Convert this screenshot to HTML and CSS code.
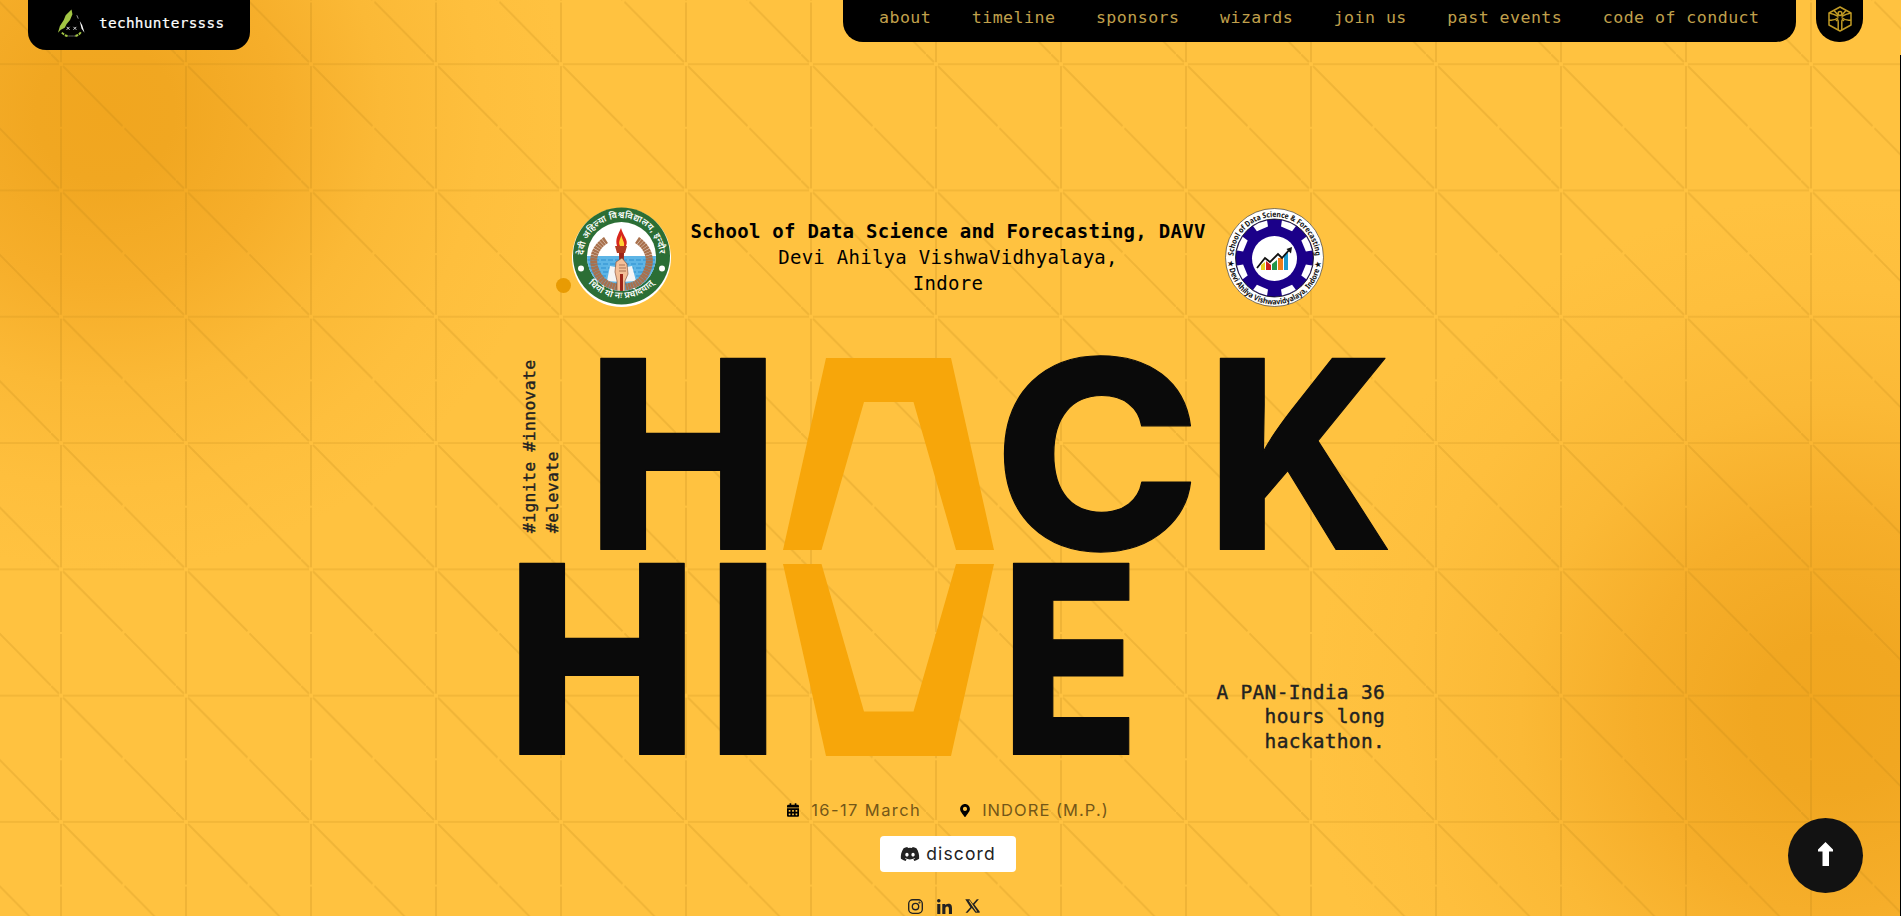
FILE: index.html
```html
<!DOCTYPE html>
<html lang="en">
<head>
<meta charset="utf-8">
<title>HackHive</title>
<link rel="stylesheet" href="styles.css">
</head>
<body>
<svg class="backdrop" aria-hidden="true">
  <defs>
    <pattern id="grid" x="51" y="54.200" width="125" height="126.300" patternUnits="userSpaceOnUse">
      <g transform="translate(10 10)">
        <path class="grid-line" d="M0 2V62.500M0 64.500V124.300M0 -10V-2"/>
        <path class="grid-line thin" d="M2 0H123M-10 0H-2"/>
        <path class="grid-line" d="M2 2L61.500 61.800M63.500 64L123 124.300M-10 -10L-2 -2"/>
      </g>
    </pattern>
  </defs>
  <rect width="100%" height="100%" fill="url(#grid)"/>
</svg>

<header class="topbar">
  <a class="brand">
    <svg class="brand-mark" viewBox="0 0 30 30">
      <path d="M15 1L16 6L13.500 12L10 16L8 20L4 22L1 25L3 18L7 12L9 7Z" fill="#a3c644"/>
      <path d="M20.500 7L22 10.500" stroke="#999" stroke-width="1" fill="none"/>
      <path d="M23.500 13L26 17L28.500 25L25.500 21Z" fill="#fff"/>
      <path d="M10 19l3 3m0-3l-3 3M17 19l3 3m0-3l-3 3" stroke="#ddd" stroke-width="1"/>
      <path d="M5 25Q8 28 11 28.500M19 28.500Q23 27.500 25 24" stroke="#a3c644" stroke-width="2" stroke-dasharray="3 1" fill="none"/>
      <path d="M12 28.500h7" stroke="#777" stroke-width="1.600" stroke-dasharray="1 1"/>
    </svg>
    <span class="brand-name">techhunterssss</span>
  </a>
  <nav class="nav">
    <a>about</a><a>timeline</a><a>sponsors</a><a>wizards</a><a>join us</a><a>past events</a><a>code of conduct</a>
  </nav>
  <a class="cube">
    <svg viewBox="0 0 24 26" width="24" height="26" fill="none" stroke="#c09a25" stroke-width="1.500" stroke-linejoin="round">
      <path d="M12 1L23 7V19L12 25L1 19V7Z"/>
      <path d="M1 7Q6 8 10.500 10.500M23 7Q18 8 13.500 10.500M1 14Q6 15 10.500 11.500M23 14Q18 15 13.500 11.500M6 4.500L10.500 9.500M18 4.500L13.500 9.500"/>
      <path d="M10.200 24V16Q10.200 12 8 15M13.800 24V16Q13.800 12 16 15"/>
      <circle cx="12" cy="7.500" r="1.900"/>
    </svg>
  </a>
</header>

<main class="hero">
  <section class="affiliation">
    <svg class="seal" viewBox="0 0 99 99">
      <defs>
        <path id="arcTop" d="M11.500 48A38 38 0 0 1 87.500 48"/>
        <path id="arcBottom" d="M14 72A43.500 43.500 0 0 0 85 72"/>
        <clipPath id="disc"><circle cx="49.500" cy="48.500" r="34.500"/></clipPath>
      </defs>
      <circle cx="49.500" cy="49.500" r="49.500" fill="#fff"/>
      <circle cx="49.500" cy="48" r="48.500" fill="#2b6e35"/>
      <circle cx="49.500" cy="48.500" r="34.500" fill="#fff"/>
      <g clip-path="url(#disc)">
        <path d="M10 48H90V84H10Z" fill="#5db5e6"/>
        <path class="waves" d="M15 52h70M17 56h68M15 60h70M17 64h68M15 68h70M20 72h60M22 76h55"/>
        <path d="M38 58L49 60L60 58L64 73L49 74L35 73Z" fill="#f5f5f5"/>
        <path class="wreath" d="M34 32C22 40 19 52 24 63C28 73 36 78 45 79"/>
        <path class="wreath" d="M65 32C77 40 80 52 75 63C71 73 63 78 54 79"/>
        <path d="M47 45h5l-1 38h-3Z" fill="#9c2418"/>
        <path d="M43 38h12l-2 7h-8Z" fill="#b13a20"/>
        <path d="M49 20C46 27 43 31 45 38H54C57 32 51 28 49 20Z" fill="#d8261c"/>
        <path d="M49.500 27C48 32 46 34 48 38H52C53 34 50 32 49.500 27Z" fill="#ffcf33"/>
        <path d="M44 54L50 50L55 56L56 66L53 73V84H45V73L43 64Z" fill="#f3bf98" stroke="#7a4128" stroke-width=".6"/>
        <path d="M47 57h6M47 60h7M47 63h7" stroke="#7a4128" stroke-width=".6"/>
        <path d="M48 66h3v17h-3Z" fill="#9c2418"/>
      </g>
      <circle cx="9" cy="60.500" r="3" fill="#fff"/><circle cx="90" cy="60.500" r="3" fill="#fff"/>
      <text class="seal-hindi"><textPath href="#arcTop" startOffset="1" textLength="116">देवी अहिल्या विश्वविद्यालय, इन्दौर</textPath></text>
      <text class="seal-hindi"><textPath href="#arcBottom" startOffset="4" textLength="74">धियो यो नः प्रचोदयात्</textPath></text>
    </svg>
    <div class="school">
      <strong>School of Data Science and Forecasting, DAVV</strong>
      <span>Devi Ahilya VishwaVidhyalaya,</span>
      <span>Indore</span>
    </div>
    <svg class="seal" viewBox="0 0 99 99">
      <defs>
        <path id="ringTop" d="M8.500 50A41 41 0 0 1 90.500 50"/>
        <path id="ringBottom" d="M3 50A46.500 46.500 0 0 0 96 50"/>
      </defs>
      <circle cx="49.500" cy="49.500" r="49" fill="#fff" stroke="#222" stroke-width=".6"/>
      <circle cx="49.500" cy="50" r="39" fill="#1b0089" stroke="#111" stroke-width=".8"/>
      <g fill="#fff" transform="translate(49.500 50)">
        <g id="notch"><path d="M-7.500 -37.500Q0 -39 7.500 -37.500L6 -31.500L-6 -31.500Z" transform="rotate(22.500)"/><path d="M-7.500 -37.500Q0 -39 7.500 -37.500L6 -31.500L-6 -31.500Z" transform="rotate(67.500)"/></g>
        <use href="#notch" transform="rotate(90)"/><use href="#notch" transform="rotate(180)"/><use href="#notch" transform="rotate(270)"/>
      </g>
      <circle cx="49.500" cy="50.500" r="22.500" fill="#fff"/>
      <path d="M36 62V57L40 54V62Z" fill="#e9d321"/><path d="M41 62V53L46 57V62Z" fill="#cf1f1f"/><path d="M47 62V56L52 52V62Z" fill="#23964b"/><path d="M53 62V50H58V62Z" fill="#ee7d1a"/><path d="M59 62V48L63 44V62Z" fill="#1b9ad0"/>
      <path d="M32 60L40 50L45 54L53 46L57 50L65 41" stroke="#111" stroke-width="1.800" fill="none"/><path d="M67 39L61.500 41L66 45.500Z" fill="#111"/>
      <text class="seal-latin"><textPath href="#ringTop" startOffset="2" textLength="124.500" lengthAdjust="spacingAndGlyphs">School of Data Science &amp; Forecasting</textPath></text>
      <text class="seal-latin"><textPath href="#ringBottom" startOffset="3" textLength="139" lengthAdjust="spacingAndGlyphs">★ Devi Ahilya Vishwavidyalaya, Indore ★</textPath></text>
    </svg>
  </section>

  <section class="wordmark">
    <p class="motto">#ignite #innovate<br>#elevate</p>
    <svg class="title" viewBox="519 350 871 412" role="img" aria-label="Hack Hive">
      <g class="title-type">
        <text transform="translate(586.200 549.500) scale(.985 1)">H</text>
        <text transform="translate(993.300 549.500) scale(1.063 1)">C</text>
        <text transform="translate(1206 549.500) scale(.967 1)">K</text>
        <text transform="translate(505.200 754.500) scale(.985 1)">H</text>
        <text transform="translate(705.500 754.500)">I</text>
        <text class="narrow" transform="translate(1000.500 754.500) scale(.87 1)">E</text>
      </g>
      <path class="hex" d="M826 358H951L994 550H956L913.500 402H864L821.500 550H783Z"/>
      <path class="hex" d="M826 756H951L994 564H956L913.500 711.500H864L821.500 564H783Z"/>
    </svg>
    <p class="pitch">A PAN-India 36<br>hours long<br>hackathon.</p>
  </section>

  <section class="meta">
    <span class="meta-item">
      <svg width="12" height="14" viewBox="0 0 448 512"><path d="M0 464c0 26 22 48 48 48h352c26 0 48-22 48-48V192H0v272zm320-196c0-7 5-12 12-12h40c7 0 12 5 12 12v40c0 7-5 12-12 12h-40c-7 0-12-5-12-12v-40zm0 128c0-7 5-12 12-12h40c7 0 12 5 12 12v40c0 7-5 12-12 12h-40c-7 0-12-5-12-12v-40zM192 268c0-7 5-12 12-12h40c7 0 12 5 12 12v40c0 7-5 12-12 12h-40c-7 0-12-5-12-12v-40zm0 128c0-7 5-12 12-12h40c7 0 12 5 12 12v40c0 7-5 12-12 12h-40c-7 0-12-5-12-12v-40zM64 268c0-7 5-12 12-12h40c7 0 12 5 12 12v40c0 7-5 12-12 12H76c-7 0-12-5-12-12v-40zm0 128c0-7 5-12 12-12h40c7 0 12 5 12 12v40c0 7-5 12-12 12H76c-7 0-12-5-12-12v-40zM400 64h-48V16c0-9-7-16-16-16h-32c-9 0-16 7-16 16v48H160V16c0-9-7-16-16-16h-32c-9 0-16 7-16 16v48H48C22 64 0 86 0 112v48h448v-48c0-26-22-48-48-48z"/></svg>
      <span class="date">16-17 March</span>
    </span>
    <span class="meta-item">
      <svg width="10" height="13" viewBox="0 0 384 512"><path d="M172 502C27 291 0 270 0 192 0 86 86 0 192 0s192 86 192 192c0 78-27 99-172 310-9 13-30 13-40 0zM192 272c44 0 80-36 80-80s-36-80-80-80-80 36-80 80 36 80 80 80z"/></svg>
      <span class="place">INDORE (M.P.)</span>
    </span>
  </section>

  <a class="discord">
    <svg width="20" height="16" viewBox="0 0 640 512"><path d="M524.500 69.800a1.500 1.500 0 0 0-.8-.7A485 485 0 0 0 404 32a1.800 1.800 0 0 0-1.900.9 337 337 0 0 0-14.900 30.600 448 448 0 0 0-134.400 0 310 310 0 0 0-15.100-30.600 1.900 1.900 0 0 0-1.900-.9A484 484 0 0 0 116 69.100a1.700 1.700 0 0 0-.8.700C39 183.700 18.200 294.700 28.400 404.400a2 2 0 0 0 .8 1.400A488 488 0 0 0 176 479.900a1.900 1.900 0 0 0 2.100-.7 348 348 0 0 0 30-48.800 1.900 1.900 0 0 0-1-2.600 321 321 0 0 1-45.900-21.900 1.900 1.900 0 0 1-.2-3.100c3.100-2.300 6.200-4.700 9.100-7.100a1.800 1.800 0 0 1 1.900-.3c96.200 43.900 200.400 43.900 295.500 0a1.800 1.800 0 0 1 1.900.2c2.900 2.400 6 4.900 9.100 7.200a1.900 1.900 0 0 1-.2 3.100 301 301 0 0 1-45.900 21.800 1.900 1.900 0 0 0-1 2.600 391 391 0 0 0 30 48.800 1.900 1.900 0 0 0 2.100.7A486 486 0 0 0 610.700 405.700a1.900 1.900 0 0 0 .8-1.400C623.700 277.600 590.900 167.500 524.500 69.800ZM222.500 337.600c-29 0-52.800-26.600-52.800-59.200s23.400-59.300 52.800-59.300c29.700 0 53.300 26.800 52.800 59.200 0 32.700-23.400 59.300-52.800 59.300Zm195.400 0c-29 0-52.800-26.600-52.800-59.200s23.400-59.300 52.800-59.300c29.700 0 53.300 26.800 52.800 59.200 0 32.700-23.200 59.300-52.800 59.300Z"/></svg>
    <span>discord</span>
  </a>

  <div class="socials">
    <svg width="15" height="15" viewBox="0 0 15 15" fill="none" stroke="#222" stroke-width="1.350"><rect x=".7" y=".7" width="13.600" height="13.600" rx="4"/><circle cx="7.500" cy="7.500" r="3.200"/><circle cx="11.500" cy="3.500" r=".4"/></svg>
    <svg width="15" height="15" viewBox="0 0 448 448"><path d="M100 448H7V149h93zM54 108a54 54 0 1 1 0-108 54 54 0 0 1 0 108zM448 448h-93V302c0-35-1-79-48-79-49 0-56 38-56 76v149h-93V149h89v41h1c13-24 43-48 88-48 94 0 112 62 112 142z"/></svg>
    <svg width="15" height="14" viewBox="0 0 512 462"><path d="M403 0h71L319 177l182 241v44H358L232 297 89 462H18l166-190L9 0h146l114 151zM378 420h39L163 40h-42z"/></svg>
  </div>
</main>

<i class="cursor-dot"></i>
<i class="edge"></i>
<a class="to-top"><svg width="15" height="24" viewBox="0 0 15 24"><path d="M7.500 0L15 7.500V9.500H11V24H4.500V9.500H0V7.500Z" fill="#fff"/></svg></a>
</body>
</html>
```

FILE: styles.css
```css
* { box-sizing: border-box; }
html, body { height: 100%; }
body {
  margin: 0;
  overflow: hidden;
  position: relative;
  background:
    radial-gradient(circle 460px at 105px 112px, #f1a61f 0%, #f1a721 15%, #f6ae2a 38%, #fbb936 60%, #febf3d 82%, rgba(255,194,64,0) 100%),
    radial-gradient(circle 520px at 1832px 715px, #f1a61f 0%, #f1a721 15%, #f6ae2a 38%, #fbb936 60%, #febf3d 82%, rgba(255,194,64,0) 100%),
    #ffc240;
  font-family: "DejaVu Sans Mono", monospace;
  color: #222;
}
p { margin: 0; }
svg { overflow: visible; }
.backdrop { position: absolute; inset: 0; width: 100%; height: 100%; z-index: -1; overflow: hidden; }
.grid-line { fill: none; stroke: #b07a10; stroke-opacity: .19; stroke-width: 2; }
.grid-line.thin { stroke-width: 1.500; stroke-opacity: .22; }

.topbar { display: flex; align-items: flex-start; height: 50px; padding: 0 38px 0 28px; }
.brand { display: flex; align-items: center; gap: 13px; width: 222px; height: 50px; padding: 0 0 5px 29px; background: #000; border-radius: 0 0 18px 18px; color: #fff; }
.brand-mark { width: 29px; height: 30px; flex: none; }
.brand-name { font-size: 14.400px; letter-spacing: .3px; -webkit-text-stroke: .2px #fff; }
.nav { display: flex; gap: 40.500px; width: 953px; height: 42px; margin-left: auto; padding: 8px 0 0 36px; background: #000; border-radius: 0 0 20px 20px; color: #c0a04c; font-size: 16.600px; line-height: 20px; letter-spacing: .46px; white-space: nowrap; }
.cube { display: flex; justify-content: center; width: 47px; height: 42px; margin-left: 20px; padding-top: 6px; background: #000; border-radius: 0 0 23px 23px; }

.hero { display: flex; flex-direction: column; align-items: center; padding-right: 5px; }
.affiliation { display: flex; justify-content: center; gap: 19px; margin-top: 158px; height: 99px; }
.seal { width: 99px; height: 99px; flex: none; }
.seal-hindi { font: 600 9px "Noto Sans Devanagari", "Noto Sans", sans-serif; fill: #fff; }
.seal-latin { font: 700 7.800px "Noto Sans", sans-serif; fill: #111; }
.waves { stroke: #2c8fd0; stroke-width: 1; stroke-dasharray: 5 2; }
.wreath { fill: none; stroke: #a9714d; stroke-width: 7; stroke-dasharray: 2.500 .3; }
.school { display: flex; flex-direction: column; align-items: center; width: 516px; padding-top: 10px; color: #000; font-size: 19px; line-height: 26px; letter-spacing: .27px; white-space: nowrap; }

.wordmark { position: relative; width: 871px; height: 412px; margin-top: 43px; margin-left: 13px; }
.title { display: block; width: 871px; height: 412px; }
.title-type { font: 800 262.800px Inter, sans-serif; fill: #0a0a0a; stroke: #0a0a0a; stroke-width: 1.200px; stroke-linejoin: round; }
.narrow { font-weight: 830; }
.hex { fill: #f7a60a; }
.motto { position: absolute; left: -1px; top: 8px; height: 175px; writing-mode: vertical-rl; transform: rotate(180deg); font-size: 16.400px; line-height: 23.300px; letter-spacing: .33px; white-space: nowrap; -webkit-text-stroke: .4px #222; }
.pitch { position: absolute; right: 5px; bottom: 8px; text-align: right; font-size: 19.500px; line-height: 24.400px; letter-spacing: .3px; -webkit-text-stroke: .4px #222; }

.meta { display: flex; gap: 39px; height: 22px; margin-top: 37px; font-family: Inter, sans-serif; font-size: 16.500px; line-height: 22px; color: #745718; }
.meta-item { display: flex; align-items: center; gap: 12px; }
.meta svg { fill: #000; }
.date { letter-spacing: 1.400px; }
.place { letter-spacing: 1.050px; }
.discord { display: flex; align-items: center; justify-content: center; gap: 6px; width: 136px; height: 36px; margin-top: 15px; background: #fff; border-radius: 4px; font: 400 17.500px Inter, sans-serif; letter-spacing: 1.150px; }
.discord span { position: relative; top: -1px; }
.discord svg, .socials svg { fill: #222; }
.socials { display: flex; gap: 13.500px; margin-top: 27px; margin-right: 8px; }
.socials svg:first-child { fill: none; }

.cursor-dot { position: absolute; left: 556px; top: 278px; width: 15px; height: 15px; border-radius: 50%; background: #e89b03; }
.edge { position: absolute; right: 0; top: 55px; bottom: 0; width: 1px; background: #000; }
.to-top { position: absolute; right: 38px; bottom: 23px; display: flex; align-items: center; justify-content: center; width: 75px; height: 75px; padding-bottom: 3px; border-radius: 50%; background: #121212; }
```
